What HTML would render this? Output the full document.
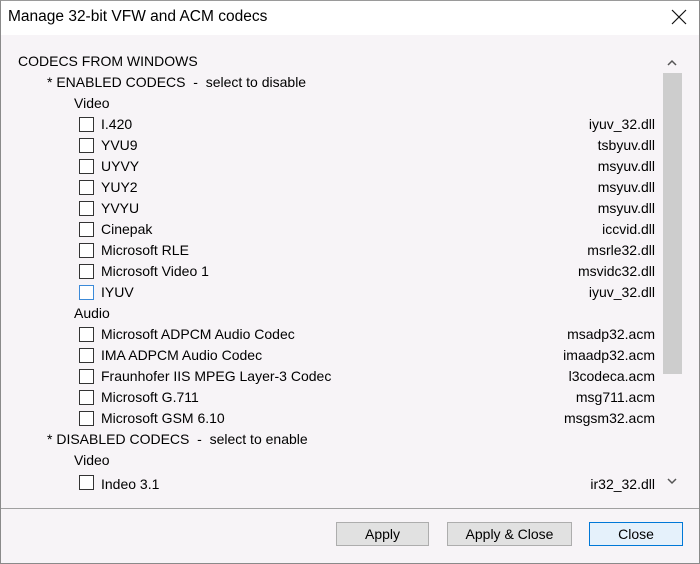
<!DOCTYPE html>
<html><head><style>
*{margin:0;padding:0;box-sizing:border-box}
body{width:700px;height:564px;overflow:hidden;background:#f7f4f7;font-family:"Liberation Sans",sans-serif;font-size:14px;color:#000;position:relative}
.win{position:absolute;left:0;top:0;width:700px;height:564px;border:1px solid #8a8a8a;border-top-color:#9a9a9a}
.title{position:absolute;left:0;top:0;width:698px;height:34px;background:#fff}
.title span{position:absolute;left:7px;top:7px;font-size:15.5px}
.x{position:absolute;left:670px;top:8px;width:16px;height:16px}
.list{position:absolute;left:0;top:34px;width:698px;height:457px;overflow:hidden}
.r{position:absolute;height:21px;line-height:21px;white-space:nowrap}
.d{position:absolute;right:44px;height:21px;line-height:21px;text-align:right}
.cb{position:absolute;left:78px;width:15px;height:15px;border:1px solid #333;background:#fff}
.sb{position:absolute;left:662px;top:72px;width:19px;height:301px;background:#cdcdcd}
.sep{position:absolute;left:0;top:507px;width:698px;height:1px;background:#a0a0a0}
.btn{position:absolute;top:521px;height:24px;border:1px solid #adadad;background:#e1e1e1;text-align:center;line-height:22px}
</style></head><body>
<div class="win">
<div class="title"><span>Manage 32-bit VFW and ACM codecs</span>
<svg class="x" viewBox="0 0 16 16"><path d="M1 1L15 15M15 1L1 15" stroke="#111" stroke-width="1.2"/></svg></div>
<div class="list">
<div class="r" style="left:17px;top:16px">CODECS FROM WINDOWS</div>
<div class="r" style="left:46px;top:37px">* ENABLED CODECS&nbsp; -&nbsp; select to disable</div>
<div class="r" style="left:73px;top:58px">Video</div>

<div class="cb" style="top:82px"></div><div class="r" style="left:100px;top:79px">I.420</div><div class="d" style="top:79px">iyuv_32.dll</div>
<div class="cb" style="top:103px"></div><div class="r" style="left:100px;top:100px">YVU9</div><div class="d" style="top:100px">tsbyuv.dll</div>
<div class="cb" style="top:124px"></div><div class="r" style="left:100px;top:121px">UYVY</div><div class="d" style="top:121px">msyuv.dll</div>
<div class="cb" style="top:145px"></div><div class="r" style="left:100px;top:142px">YUY2</div><div class="d" style="top:142px">msyuv.dll</div>
<div class="cb" style="top:166px"></div><div class="r" style="left:100px;top:163px">YVYU</div><div class="d" style="top:163px">msyuv.dll</div>
<div class="cb" style="top:187px"></div><div class="r" style="left:100px;top:184px">Cinepak</div><div class="d" style="top:184px">iccvid.dll</div>
<div class="cb" style="top:208px"></div><div class="r" style="left:100px;top:205px">Microsoft RLE</div><div class="d" style="top:205px">msrle32.dll</div>
<div class="cb" style="top:229px"></div><div class="r" style="left:100px;top:226px">Microsoft Video 1</div><div class="d" style="top:226px">msvidc32.dll</div>
<div class="cb" style="top:250px;border-color:#3c8ad8"></div><div class="r" style="left:100px;top:247px">IYUV</div><div class="d" style="top:247px">iyuv_32.dll</div>
<div class="r" style="left:73px;top:268px">Audio</div>
<div class="cb" style="top:292px"></div><div class="r" style="left:100px;top:289px">Microsoft ADPCM Audio Codec</div><div class="d" style="top:289px">msadp32.acm</div>
<div class="cb" style="top:313px"></div><div class="r" style="left:100px;top:310px">IMA ADPCM Audio Codec</div><div class="d" style="top:310px">imaadp32.acm</div>
<div class="cb" style="top:334px"></div><div class="r" style="left:100px;top:331px">Fraunhofer IIS MPEG Layer-3 Codec</div><div class="d" style="top:331px">l3codeca.acm</div>
<div class="cb" style="top:355px"></div><div class="r" style="left:100px;top:352px">Microsoft G.711</div><div class="d" style="top:352px">msg711.acm</div>
<div class="cb" style="top:376px"></div><div class="r" style="left:100px;top:373px">Microsoft GSM 6.10</div><div class="d" style="top:373px">msgsm32.acm</div>
<div class="r" style="left:46px;top:394px">* DISABLED CODECS&nbsp; -&nbsp; select to enable</div>
<div class="r" style="left:73px;top:415px">Video</div>
<div class="cb" style="top:440px"></div><div class="r" style="left:100px;top:439px">Indeo 3.1</div><div class="d" style="top:439px">ir32_32.dll</div>
</div>
<svg style="position:absolute;left:665px;top:58px" width="12" height="8" viewBox="0 0 12 8"><path d="M2 6L6 2L10 6" stroke="#555" stroke-width="1.5" fill="none"/></svg>
<div class="sb"></div>
<svg style="position:absolute;left:665px;top:476px" width="12" height="8" viewBox="0 0 12 8"><path d="M2 2L6 6L10 2" stroke="#555" stroke-width="1.5" fill="none"/></svg>
<div class="sep"></div>
<div class="btn" style="left:335px;width:93px">Apply</div>
<div class="btn" style="left:446px;width:125px">Apply &amp; Close</div>
<div class="btn" style="left:588px;width:94px;border-color:#0078d7;background:#e5f1fb">Close</div>
</div>
</body></html>
